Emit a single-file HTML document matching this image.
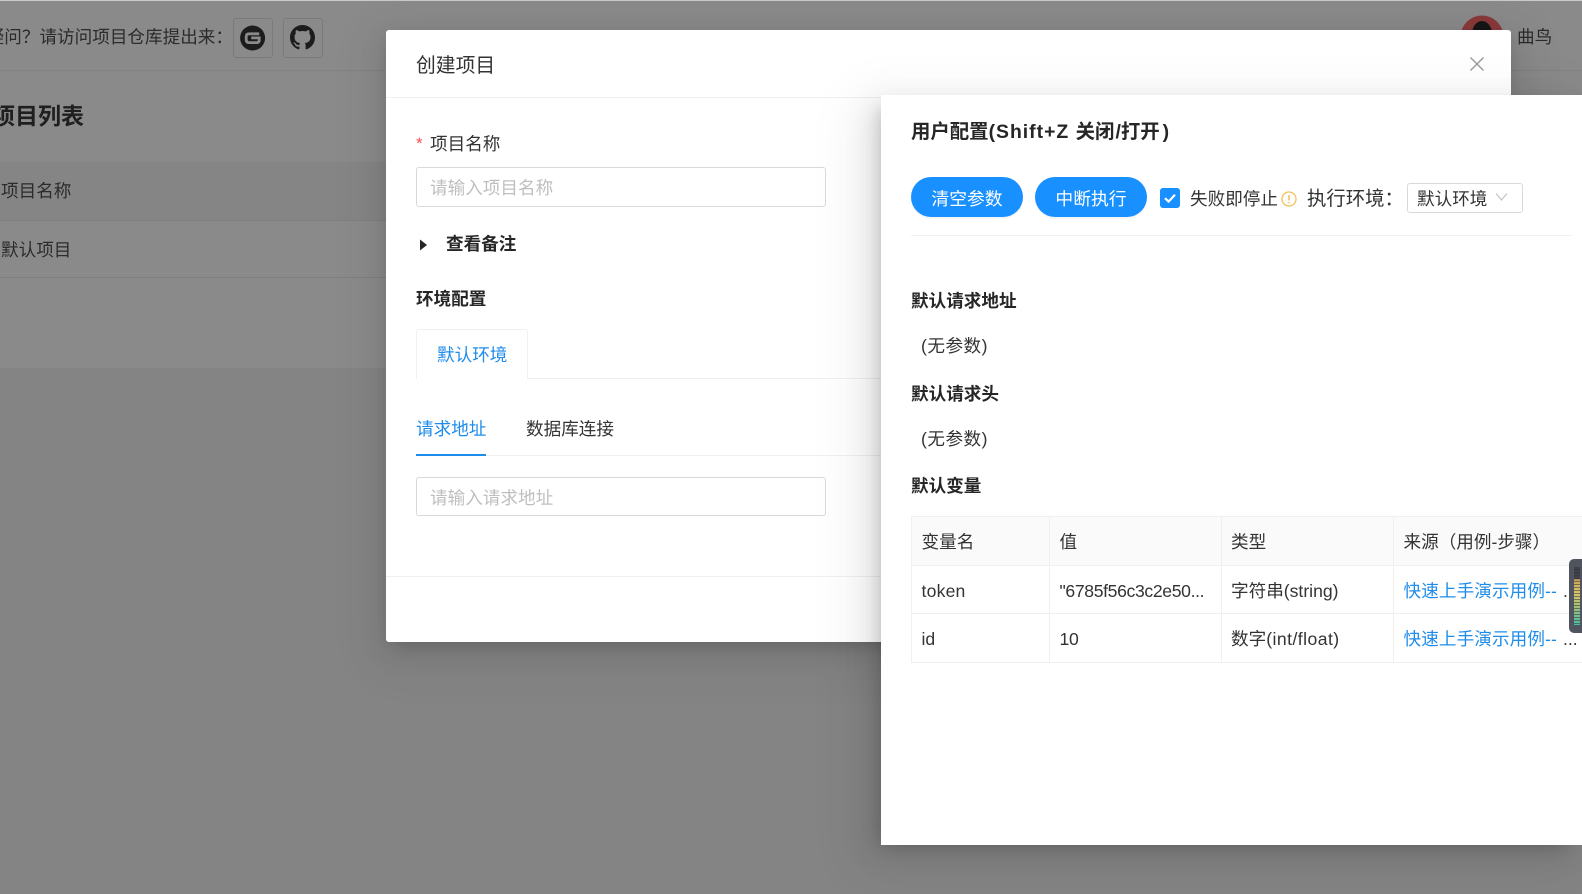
<!DOCTYPE html>
<html lang="zh-CN">
<head>
<meta charset="utf-8">
<title>创建项目</title>
<style>
html,body{margin:0;padding:0;width:1582px;height:894px;overflow:hidden;background:#8a8a8a}
body{position:relative;font-family:"Liberation Sans","Noto Sans CJK SC",sans-serif;font-size:17.6px;color:#333}
.a{position:absolute}
.t{position:absolute;line-height:24px;height:24px;white-space:nowrap}
.b{font-weight:700;color:#262626}
.bg{color:#2b2b2b}
.box{box-sizing:border-box;position:absolute;background:#fff;border:1px solid #d9d9d9;border-radius:3px}
.ph{color:#bfbfbf}
.blue{color:#1f8ceb}
.hl{position:absolute;background:#f0f0f0;height:1px}
.vl{position:absolute;background:#f0f0f0;width:1px}
.btn{position:absolute;top:177px;height:40px;width:112px;border-radius:20px;background:#1890ff;color:#fff;text-align:center;line-height:44px;font-size:17.8px;box-shadow:0 2px 0 rgba(0,0,0,.04)}
</style>
</head>
<body>
<!-- background page -->
<div class="a" style="left:0;top:0;width:1582px;height:1px;background:#c9c9c9"></div>
<div class="a" style="left:0;top:70px;width:1582px;height:1px;background:#828282"></div>
<div class="a" style="left:0;top:162px;width:400px;height:58px;background:#858585"></div>
<div class="a" style="left:0;top:220px;width:400px;height:1px;background:#7e7e7e"></div>
<div class="a" style="left:0;top:277px;width:400px;height:1px;background:#7e7e7e"></div>
<div class="a" style="left:0;top:368px;width:1582px;height:526px;background:#848484"></div>

<div class="t bg" style="right:1349px;top:25px">疑问？请访问项目仓库提出来：</div>
<div class="a" style="box-sizing:border-box;left:233px;top:18px;width:40px;height:40px;border:1px solid #7a7a7a;border-radius:3px"></div>
<div class="a" style="box-sizing:border-box;left:283px;top:18px;width:40px;height:40px;border:1px solid #7a7a7a;border-radius:3px"></div>
<svg class="a" style="left:240px;top:25px" width="26" height="26" viewBox="0 0 26 26">
  <circle cx="12.6" cy="13" r="12.5" fill="#1c1c1c"/>
  <path d="M19.2 8.8H9.2Q6.2 8.8 6.2 11.6V14.8Q6.2 17.6 9.2 17.6H16.6Q19.2 17.6 19.2 15.2V12.9H11.2" fill="none" stroke="#8a8a8a" stroke-width="2.8"/>
</svg>
<svg class="a" style="left:290px;top:25px" width="25" height="25" viewBox="0 0 16 16">
  <path fill="#1c1c1c" d="M8 0C3.58 0 0 3.58 0 8c0 3.54 2.29 6.53 5.47 7.59.4.07.55-.17.55-.38 0-.19-.01-.82-.01-1.49-2.01.37-2.53-.49-2.69-.94-.09-.23-.48-.94-.82-1.13-.28-.15-.68-.52-.01-.53.63-.01 1.08.58 1.23.82.72 1.21 1.87.87 2.33.66.07-.52.28-.87.51-1.07-1.78-.2-3.64-.89-3.64-3.95 0-.87.31-1.59.82-2.15-.08-.2-.36-1.02.08-2.12 0 0 .67-.21 2.2.82.64-.18 1.32-.27 2-.27.68 0 1.36.09 2 .27 1.53-1.04 2.2-.82 2.2-.82.44 1.1.16 1.92.08 2.12.51.56.82 1.27.82 2.15 0 3.07-1.87 3.75-3.65 3.95.29.25.54.73.54 1.48 0 1.07-.01 1.93-.01 2.2 0 .21.15.46.55.38A8.013 8.013 0 0016 8c0-4.42-3.58-8-8-8z"/>
</svg>
<div class="t" style="left:-8px;top:104px;font-size:23px;line-height:24px;font-weight:700;color:#1f1f1f">项目列表</div>
<div class="t bg" style="left:1px;top:179px">项目名称</div>
<div class="t bg" style="left:1px;top:238px">默认项目</div>

<!-- avatar -->
<svg class="a" style="left:1460px;top:15px" width="44" height="44" viewBox="0 0 44 44">
  <circle cx="22" cy="22" r="21.5" fill="#8a3a3a"/>
  <ellipse cx="22" cy="19" rx="10" ry="13" fill="#161616"/>
</svg>
<div class="t bg" style="left:1517px;top:25px;font-size:17.6px">曲鸟</div>

<!-- modal -->
<div class="a" style="left:386px;top:30px;width:1125px;height:612px;background:#fff;border-radius:3px;box-shadow:0 6px 16px -8px rgba(0,0,0,.2),0 9px 28px rgba(0,0,0,.1),0 12px 48px 16px rgba(0,0,0,.05)"></div>
<div class="hl" style="left:386px;top:97px;width:1125px"></div>
<div class="t" style="left:416px;top:54px;font-size:19.8px;color:#333">创建项目</div>
<svg class="a" style="left:1469px;top:56px" width="16" height="16" viewBox="0 0 16 16"><path d="M1.5 1.5L14.5 14.5M14.5 1.5L1.5 14.5" stroke="#999" stroke-width="1.4" fill="none"/></svg>

<div class="t" style="left:416px;top:132px;color:#ff4d4f;font-size:17px">*</div>
<div class="t" style="left:430px;top:132px">项目名称</div>
<div class="box" style="left:416px;top:167px;width:410px;height:40px"></div>
<div class="t ph" style="left:430px;top:176px">请输入项目名称</div>

<svg class="a" style="left:420px;top:239px" width="9" height="12" viewBox="0 0 9 12"><path d="M0 0.5L7 6L0 11.5Z" fill="#262626"/></svg>
<div class="t b" style="left:446px;top:232px">查看备注</div>
<div class="t b" style="left:416px;top:287px">环境配置</div>

<div class="hl" style="left:416px;top:378px;width:465px"></div>
<div class="a" style="box-sizing:border-box;left:416px;top:329px;width:112px;height:50px;background:#fff;border:1px solid #f0f0f0;border-bottom:0;border-radius:3px 3px 0 0"></div>
<div class="t blue" style="left:437px;top:343px">默认环境</div>

<div class="t blue" style="left:416px;top:417px">请求地址</div>
<div class="t" style="left:526px;top:417px">数据库连接</div>
<div class="hl" style="left:416px;top:455px;width:465px"></div>
<div class="a" style="left:416px;top:454px;width:70px;height:2px;background:#1f8ceb"></div>
<div class="box" style="left:416px;top:477px;width:410px;height:39px"></div>
<div class="t ph" style="left:430px;top:486px">请输入请求地址</div>
<div class="hl" style="left:386px;top:576px;width:495px"></div>

<!-- drawer -->
<div class="a" style="left:881px;top:95px;width:701px;height:750px;background:#fff;box-shadow:-6px 6px 16px -8px rgba(0,0,0,.2),-9px 9px 28px rgba(0,0,0,.1),-12px 12px 48px 16px rgba(0,0,0,.05)"></div>
<div class="t b" style="left:911px;top:120px;font-size:19.4px">用户配置<span style="letter-spacing:1px">(Shift+Z </span>关闭<span style="padding-left:1px">/</span>打开<span style="padding-left:3px">)</span></div>
<div class="btn" style="left:911px">清空参数</div>
<div class="btn" style="left:1035px">中断执行</div>
<svg class="a" style="left:1160px;top:188px" width="20" height="20" viewBox="0 0 20 20">
  <rect width="20" height="20" rx="3" fill="#1890ff"/>
  <path d="M5 10.2L8.6 13.6L15 6.8" fill="none" stroke="#fff" stroke-width="2.2"/>
</svg>
<div class="t" style="left:1190px;top:187px">失败即停止</div>
<svg class="a" style="left:1281px;top:191px" width="16" height="16" viewBox="0 0 16 16">
  <circle cx="8" cy="8" r="7" fill="none" stroke="#f2bf57" stroke-width="1.3"/>
  <path d="M8 4V9.5M8 11V12.4" stroke="#f2bf57" stroke-width="1.5" fill="none"/>
</svg>
<div class="t" style="left:1307px;top:187px;font-size:19.36px">执行环境：</div>
<div class="box" style="left:1407px;top:183px;width:116px;height:30px"></div>
<div class="t" style="left:1417px;top:187px">默认环境</div>
<svg class="a" style="left:1495px;top:192px" width="13" height="10" viewBox="0 0 13 10"><path d="M1 1.5L6.5 8L12 1.5" fill="none" stroke="#bfbfbf" stroke-width="1.1"/></svg>
<div class="hl" style="left:911px;top:235px;width:661px"></div>

<div class="t b" style="left:911px;top:289px">默认请求地址</div>
<div class="t" style="left:921px;top:334px;letter-spacing:.5px">(无参数)</div>
<div class="t b" style="left:911px;top:382px">默认请求头</div>
<div class="t" style="left:921px;top:427px;letter-spacing:.5px">(无参数)</div>
<div class="t b" style="left:911px;top:474px">默认变量</div>

<!-- table -->
<div class="a" style="left:911px;top:516px;width:671px;height:49px;background:#fafafa"></div>
<div class="hl" style="left:911px;top:516px;width:671px"></div>
<div class="hl" style="left:911px;top:565px;width:671px"></div>
<div class="hl" style="left:911px;top:613px;width:671px"></div>
<div class="hl" style="left:911px;top:662px;width:671px"></div>
<div class="vl" style="left:911px;top:516px;height:147px"></div>
<div class="vl" style="left:1049px;top:516px;height:147px"></div>
<div class="vl" style="left:1221px;top:516px;height:147px"></div>
<div class="vl" style="left:1393px;top:516px;height:147px"></div>

<div class="t" style="left:921.5px;top:530px">变量名</div>
<div class="t" style="left:1059.5px;top:530px">值</div>
<div class="t" style="left:1231px;top:530px">类型</div>
<div class="t" style="left:1403.5px;top:530px">来源（用例-步骤）</div>

<div class="t" style="left:921.5px;top:579px;letter-spacing:.2px">token</div>
<div class="t" style="left:1059.5px;top:579px;letter-spacing:-.35px">"6785f56c3c2e50...</div>
<div class="t" style="left:1231px;top:579px">字符串(string)</div>
<div class="t blue" style="left:1403.5px;top:579px;letter-spacing:.1px">快速上手演示用例--</div>
<div class="t" style="left:1563px;top:579px">...</div>

<div class="t" style="left:921.5px;top:627px">id</div>
<div class="t" style="left:1059.5px;top:627px;letter-spacing:-.3px">10</div>
<div class="t" style="left:1231px;top:627px">数字<span style="letter-spacing:.45px">(int/float)</span></div>
<div class="t blue" style="left:1403.5px;top:627px;letter-spacing:.1px">快速上手演示用例--</div>
<div class="t" style="left:1563px;top:627px">...</div>

<!-- floating widget -->
<div class="a" style="left:1569px;top:559px;width:13px;height:74px;background:#50545f;border-radius:5px 0 0 5px"></div>
<div class="a" style="left:1574px;top:567px;width:6px;height:58px;background:linear-gradient(#3f424c 0,#3f424c 20%,#c9a25c 22%,#d9c66a 45%,#9dc077 70%,#4fb9a3 100%)"></div>
<div class="a" style="left:1574px;top:567px;width:6px;height:58px;background:repeating-linear-gradient(transparent 0,transparent 2px,rgba(50,50,60,.55) 2px,rgba(50,50,60,.55) 3px)"></div>
</body>
</html>
